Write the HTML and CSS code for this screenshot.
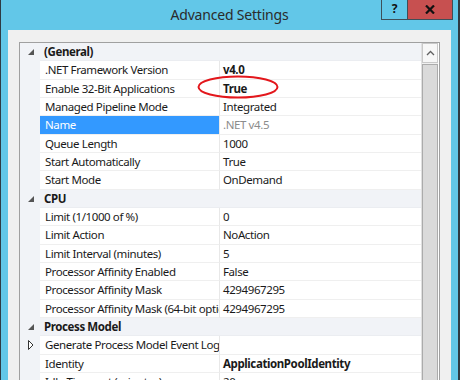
FILE: index.html
```html
<!DOCTYPE html>
<html lang="en">
<head>
  <meta charset="UTF-8">
  <title>Advanced Settings</title>
  <link rel="stylesheet" href="styles.css">
</head>
<body>
  <div class="window">
    <!-- Title Bar -->
    <div class="titlebar">
      <div></div>
      <div class="title">Advanced Settings</div>
      <div class="title-buttons">
        <div class="btn-help">?</div>
        <div class="btn-close">
          <svg width="10" height="9" viewBox="0 0 10 9"><path d="M1 0.5 L9 8.5 M9 0.5 L1 8.5" stroke="#111" stroke-width="2.2"/></svg>
        </div>
      </div>
    </div>

    <!-- Client Area -->
    <div class="client">
      <div class="grid">
        <div class="rows">
          <div class="row category">
            <div class="gutter"><svg width="6" height="6" viewBox="0 0 6 6"><polygon points="6,0 6,6 0,6" class="expanded"/></svg></div>
            <div class="cat-label">(General)</div>
          </div>
          <div class="row"><div class="gutter"></div><div class="name">.NET Framework Version</div><div class="value bold">v4.0</div></div>
          <div class="row"><div class="gutter"></div><div class="name">Enable 32-Bit Applications</div><div class="value bold">True</div></div>
          <div class="row"><div class="gutter"></div><div class="name">Managed Pipeline Mode</div><div class="value">Integrated</div></div>
          <div class="row selected"><div class="gutter"></div><div class="name">Name</div><div class="value readonly">.NET v4.5</div></div>
          <div class="row"><div class="gutter"></div><div class="name">Queue Length</div><div class="value">1000</div></div>
          <div class="row"><div class="gutter"></div><div class="name">Start Automatically</div><div class="value">True</div></div>
          <div class="row"><div class="gutter"></div><div class="name">Start Mode</div><div class="value">OnDemand</div></div>
          <div class="row category">
            <div class="gutter"><svg width="6" height="6" viewBox="0 0 6 6"><polygon points="6,0 6,6 0,6" class="expanded"/></svg></div>
            <div class="cat-label">CPU</div>
          </div>
          <div class="row"><div class="gutter"></div><div class="name">Limit (1/1000 of %)</div><div class="value">0</div></div>
          <div class="row"><div class="gutter"></div><div class="name">Limit Action</div><div class="value">NoAction</div></div>
          <div class="row"><div class="gutter"></div><div class="name">Limit Interval (minutes)</div><div class="value">5</div></div>
          <div class="row"><div class="gutter"></div><div class="name">Processor Affinity Enabled</div><div class="value">False</div></div>
          <div class="row"><div class="gutter"></div><div class="name">Processor Affinity Mask</div><div class="value">4294967295</div></div>
          <div class="row"><div class="gutter"></div><div class="name">Processor Affinity Mask (64-bit option)</div><div class="value">4294967295</div></div>
          <div class="row category">
            <div class="gutter"><svg width="6" height="6" viewBox="0 0 6 6"><polygon points="6,0 6,6 0,6" class="expanded"/></svg></div>
            <div class="cat-label">Process Model</div>
          </div>
          <div class="row">
            <div class="gutter"><svg width="6" height="10" viewBox="0 0 6 10"><polygon points="0.5,0.5 5,5 0.5,9.5" class="collapsed"/></svg></div>
            <div class="name">Generate Process Model Event Log</div><div class="value"></div>
          </div>
          <div class="row"><div class="gutter"></div><div class="name">Identity</div><div class="value bold">ApplicationPoolIdentity</div></div>
          <div class="row"><div class="gutter"></div><div class="name">Idle Time-out (minutes)</div><div class="value">20</div></div>
        </div>

        <!-- Scrollbar -->
        <div class="scrollbar">
          <div class="scroll-up">
            <svg width="9" height="6" viewBox="0 0 9 6"><polyline points="1,5 4.5,1.5 8,5" fill="none" stroke="#606060" stroke-width="1.3"/></svg>
          </div>
          <div class="scroll-thumb"></div>
        </div>
      </div>
    </div>

    <!-- Red annotation ellipse -->
    <svg class="annotation" width="90" height="30" viewBox="0 0 90 30">
      <ellipse cx="44" cy="14" rx="39.5" ry="10.5" fill="none" stroke="#e3171c" stroke-width="2"/>
    </svg>
  </div>
</body>
</html>
```

FILE: styles.css
```css
/* General Styles */
body {
  margin: 0;
  background: #2e3b44;
  font-family: 'Noto Sans', sans-serif;
  overflow: hidden;
}

.window {
  position: relative;
  width: 457px;
  height: 380px;
  background: #62c7e8;
  border-left: 1px solid #2e3b44;
  border-right: 2px solid #2e3b44;
  overflow: hidden;
}

/* Title Bar */
.titlebar {
  height: 30px;
  display: grid;
  grid-template-columns: 1fr auto 1fr;
  align-items: start;
}

.title {
  font-size: 14px;
  letter-spacing: -0.2px;
  color: #2b2b2b;
  line-height: 30px;
}

.title-buttons {
  justify-self: end;
  display: flex;
  margin-right: 5px;
}

.btn-help {
  width: 27px;
  height: 20px;
  box-sizing: border-box;
  border: 1px solid #3d4f59;
  border-top: none;
  font-size: 12px;
  font-weight: bold;
  color: #111;
  text-align: center;
  line-height: 18px;
}

.btn-close {
  width: 45px;
  height: 20px;
  box-sizing: border-box;
  background: #c75050;
  border: 1px solid #3d4f59;
  border-top: none;
  border-left: none;
  display: flex;
  align-items: center;
  justify-content: center;
}

/* Client Area */
.client {
  margin: 0 7px;
  height: 350px;
  padding: 12px 11px 0 11px;
  background: #f0f0f0;
}

.grid {
  display: flex;
  height: 400px;
  border: 1px solid #a0a0a0;
  background: #fff;
}

.rows {
  width: 401px;
}

.row {
  display: flex;
  height: 18.33px;
  font-size: 11.5px;
  letter-spacing: -0.4px;
  color: #1a1a1a;
}

.gutter {
  width: 20px;
  flex: none;
  background: #f1f3f7;
  display: flex;
  align-items: center;
  justify-content: center;
  padding-left: 1px;
  box-sizing: border-box;
}

.name,
.value {
  box-sizing: border-box;
  border-bottom: 1px solid #efefef;
  white-space: nowrap;
  overflow: hidden;
  display: flex;
  align-items: center;
}

.name {
  width: 180px;
  flex: none;
  padding-left: 5px;
  border-right: 1px solid #e8e8e8;
}

.value {
  width: 201px;
  flex: none;
  padding-left: 3px;
}

.bold {
  font-weight: bold;
}

.readonly {
  color: #8c8c8c;
}

.selected .name {
  background: #3399ff;
  color: #fff;
}

/* Category Rows */
.category {
  background: #f1f3f7;
}

.cat-label {
  flex: 1;
  padding-left: 4px;
  font-weight: bold;
  display: flex;
  align-items: center;
  border-bottom: 1px solid #ebedf1;
  box-sizing: border-box;
}

.expanded {
  fill: #555;
}

.collapsed {
  fill: #fff;
  stroke: #333;
  stroke-width: 1;
}

/* Scrollbar */
.scrollbar {
  width: 17px;
  background: #f0f0f0;
  border-left: 1px solid #e0e0e0;
  box-sizing: border-box;
}

.scroll-up {
  height: 18px;
  margin: 0 0 1px 0;
  border: 1px solid #c8c8c8;
  background: #f7f7f7;
  display: flex;
  align-items: center;
  justify-content: center;
}

.scroll-thumb {
  height: 400px;
  background: #dadada;
  border: 1px solid #ababab;
}

/* Red annotation ellipse */
.annotation {
  position: absolute;
  left: 193px;
  top: 73px;
}
```
